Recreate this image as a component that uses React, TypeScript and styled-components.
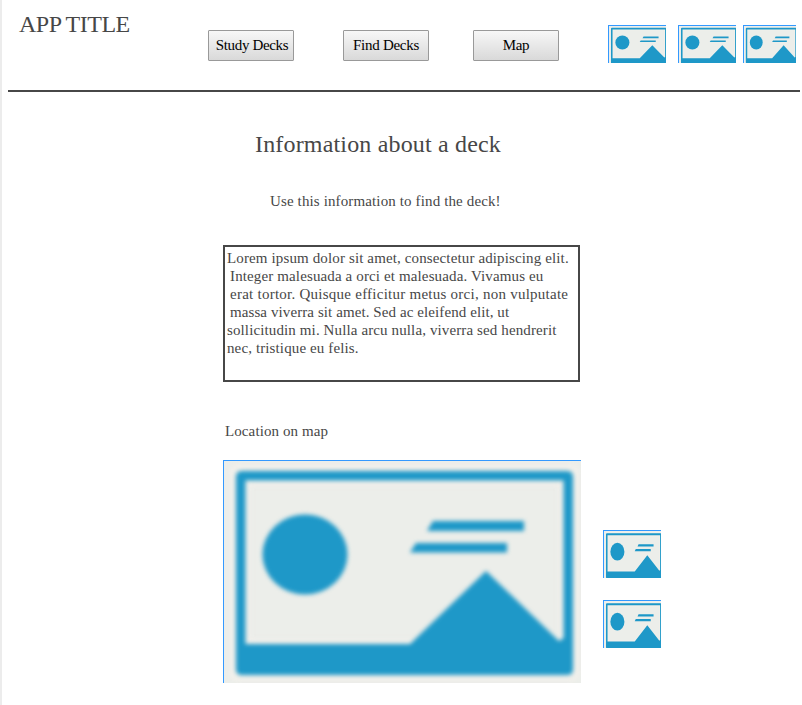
import React from "react";
import styled, { createGlobalStyle } from "styled-components";

const Global = createGlobalStyle`
  * { box-sizing: border-box; }
  html, body { margin: 0; background: #fff; overflow: hidden; }
  body { font-family: "Liberation Serif", "Times New Roman", serif; color: #474747; }
`;

const Page = styled.div`
  height: 705px;
  border-left: 2px solid #ececec;
  padding-left: 6px;
`;

const Header = styled.header`
  display: flex;
  align-items: flex-start;
  width: 792px;
  height: 92px;
  border-bottom: 2px solid #474747;
`;

const Title = styled.h1`
  margin: 10px 0 0 11px;
  width: 189px;
  font-size: 24px;
  line-height: 28px;
  font-weight: 400;
  letter-spacing: -0.52px;
  white-space: nowrap;
`;

const Nav = styled.nav`
  display: grid;
  grid-template-columns: 135px 130px 135px;
  margin-top: 30px;
`;

const NavButton = styled.button<{ $spacing: number; $shift?: number }>`
  width: 86px;
  height: 31px;
  padding: 0 0 1px ${(p) => p.$shift ?? 0}px;
  border: 1px solid #999;
  border-radius: 1px;
  background: linear-gradient(#f7f7f7, #d9d9d9);
  color: #000;
  font-family: inherit;
  font-size: 15px;
  letter-spacing: ${(p) => p.$spacing}px;
  white-space: nowrap;
`;

const Shortcuts = styled.div`
  display: grid;
  grid-template-columns: 70px 65px 53px;
  margin-top: 25px;
`;

const Main = styled.main`
  width: 460px;
  margin-left: 215px;
`;

const Heading = styled.h2`
  margin: 38px 0 0 32px;
  font-size: 24px;
  line-height: 28px;
  font-weight: 400;
  letter-spacing: 0.17px;
  white-space: nowrap;
`;

const Lead = styled.p`
  margin: 34px 0 0 47px;
  font-size: 15px;
  line-height: 18px;
  letter-spacing: 0.13px;
  white-space: nowrap;
`;

const Description = styled.div`
  width: 357px;
  height: 137px;
  margin-top: 35px;
  padding: 2px;
  border: 2px solid #474747;
  font-size: 15px;
  line-height: 18px;
`;

const Line = styled.div<{ $spacing: number; $indent?: boolean }>`
  padding-left: ${(p) => (p.$indent ? 3 : 0)}px;
  letter-spacing: ${(p) => p.$spacing}px;
  white-space: nowrap;
`;

const MapLabel = styled.p`
  margin: 40px 0 0 2px;
  font-size: 15px;
  line-height: 18px;
  letter-spacing: 0.1px;
`;

const MapRow = styled.div`
  display: flex;
  align-items: flex-start;
  gap: 22px;
  margin-top: 20px;
`;

const SideImages = styled.div`
  display: grid;
  gap: 22px;
  margin-top: 70px;
`;

const Frame = styled.div<{ $w: number; $h: number; $bleed: number }>`
  width: ${(p) => p.$w}px;
  height: ${(p) => p.$h}px;
  border: solid #3399ff;
  border-width: 1px 0 0 1px;
  background: #eceeea;
  overflow: hidden;

  svg {
    display: block;
    width: calc(100% + ${(p) => p.$bleed}px);
    height: calc(100% + ${(p) => p.$bleed}px);
  }
`;

function Picture({ w, h, bleed = 2 }: { w: number; h: number; bleed?: number }) {
  const id = React.useId();
  return (
    <Frame $w={w} $h={h} $bleed={bleed}>
      <svg viewBox="0 0 357 222" preserveAspectRatio="none">
        <defs>
          <filter id={id} x="-5%" y="-5%" width="110%" height="110%" colorInterpolationFilters="sRGB">
            <feGaussianBlur stdDeviation="2" />
          </filter>
        </defs>
        <rect width="357" height="222" fill="#eceeea" />
        <g filter={`url(#${id})`}>
          <rect x="8" y="6" width="345" height="212" rx="6" fill="none" stroke="#f2f0eb" strokeWidth="5" />
          <rect x="24" y="22" width="313" height="159" fill="none" stroke="#f2f0eb" strokeWidth="5" />
          <g fill="#1e98c8">
            <path
              fillRule="evenodd"
              d="M18 10H343Q349 10 349 16V208Q349 214 343 214H18Q12 214 12 208V16Q12 10 18 10ZM21.500 19.500V183H186L262 110L335 180L339.500 177V19.500Z"
            />
            <ellipse cx="81" cy="93.500" rx="42.500" ry="40" />
            <path d="M209 60H300V70H203Z" />
            <path d="M192 82H283V91.500H186Z" />
          </g>
        </g>
      </svg>
    </Frame>
  );
}

const lines = [
  { text: "Lorem ipsum dolor sit amet, consectetur adipiscing elit.", spacing: 0.13 },
  { text: "Integer malesuada a orci et malesuada. Vivamus eu", spacing: 0.13, indent: true },
  { text: "erat tortor. Quisque efficitur metus orci, non vulputate", spacing: 0.25, indent: true },
  { text: "massa viverra sit amet. Sed ac eleifend elit, ut", spacing: 0.09, indent: true },
  { text: "sollicitudin mi. Nulla arcu nulla, viverra sed hendrerit", spacing: 0.12 },
  { text: "nec, tristique eu felis.", spacing: 0.12 },
];

export default function App() {
  return (
    <>
      <Global />
      <Page>
        <Header>
          <Title>APP TITLE</Title>
          <Nav>
            <NavButton $spacing={-0.35} $shift={2}>Study Decks</NavButton>
            <NavButton $spacing={-0.28}>Find Decks</NavButton>
            <NavButton $spacing={-0.3}>Map</NavButton>
          </Nav>
          <Shortcuts>
            <Picture w={58} h={38} />
            <Picture w={58} h={38} />
            <Picture w={53} h={38} />
          </Shortcuts>
        </Header>
        <Main>
          <Heading>Information about a deck</Heading>
          <Lead>Use this information to find the deck!</Lead>
          <Description>
            {lines.map((l) => (
              <Line key={l.text} $spacing={l.spacing} $indent={l.indent}>
                {l.text}
              </Line>
            ))}
          </Description>
          <MapLabel>Location on map</MapLabel>
          <MapRow>
            <Picture w={358} h={223} bleed={0} />
            <SideImages>
              <Picture w={58} h={48} />
              <Picture w={58} h={48} />
            </SideImages>
          </MapRow>
        </Main>
      </Page>
    </>
  );
}
